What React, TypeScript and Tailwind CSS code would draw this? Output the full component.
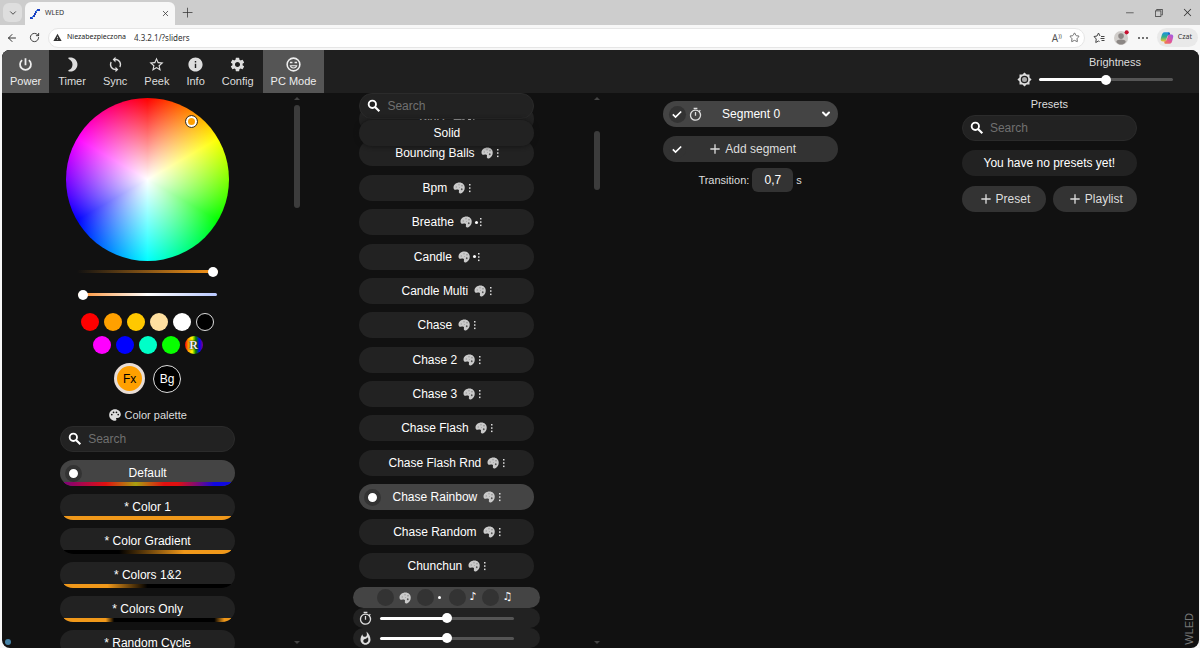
import { useState } from "react";
import type { ReactNode } from "react";
import {
    MdAdd,
    MdInfo,
    MdNightlightRound,
    MdOutlineTimer,
    MdPalette,
    MdSettings,
    MdStarBorder,
    MdSync,
    MdWarning,
    MdWhatshot,
} from "react-icons/md";
import {
    VscAdd,
    VscChromeClose,
    VscChromeMinimize,
    VscChromeRestore,
} from "react-icons/vsc";
import {
    LuArrowLeft,
    LuChevronDown,
    LuRotateCw,
    LuStar,
    LuX,
} from "react-icons/lu";

const palettes = [
    {
        name: "Default",
        bar: "bg-[linear-gradient(90deg,#80007a,#e01010_25%,#a8a010_43%,#e01010_60%,#e01010_68%,#7a0a7a_80%,#1008e0_90%,#1008e0)]",
    },
    { name: "* Color 1", bar: "bg-[#f0981a]" },
    {
        name: "* Color Gradient",
        bar: "bg-[linear-gradient(90deg,#000_33%,#f0981a_72%)]",
    },
    {
        name: "* Colors 1&2",
        bar: "bg-[linear-gradient(90deg,#f0981a_26%,#000_50%)]",
    },
    {
        name: "* Colors Only",
        bar: "bg-[linear-gradient(90deg,#f0981a_25%,#000_30%,#000_90%,#f0981a_96%)]",
    },
    { name: "* Random Cycle", bar: "bg-[#000]" },
];

const effects = [
    { name: "Blurz", flags: "pd" },
    { name: "Bouncing Balls", flags: "p" },
    { name: "Bpm", flags: "p" },
    { name: "Breathe", flags: "pd" },
    { name: "Candle", flags: "pd" },
    { name: "Candle Multi", flags: "p" },
    { name: "Chase", flags: "p" },
    { name: "Chase 2", flags: "p" },
    { name: "Chase 3", flags: "p" },
    { name: "Chase Flash", flags: "p" },
    { name: "Chase Flash Rnd", flags: "p" },
    { name: "Chase Rainbow", flags: "p" },
    { name: "Chase Random", flags: "p" },
    { name: "Chunchun", flags: "p" },
];

const swatches = [
    [
        ["Red", "bg-[#ff0000]"],
        ["Orange", "bg-[#ffa000]"],
        ["Amber", "bg-[#ffc800]"],
        ["Warm white", "bg-[#ffe0a0]"],
        ["White", "bg-white"],
        ["Black", "bg-black border border-[#ddd]"],
    ],
    [
        ["Magenta", "bg-[#ff00ff]"],
        ["Blue", "bg-[#0000ff]"],
        ["Cyan", "bg-[#00ffc8]"],
        ["Green", "bg-[#08ff00]"],
    ],
];

const thumb =
    "appearance-none rounded-full [&::-webkit-slider-thumb]:appearance-none [&::-webkit-slider-thumb]:size-[10px] [&::-webkit-slider-thumb]:rounded-full [&::-webkit-slider-thumb]:bg-white";
const halfTrack =
    "h-[3px] bg-[linear-gradient(90deg,#fff_50%,#555_50%)]";
const filterBox = "size-[17px] appearance-none rounded-full bg-[#333]";

function PaletteEmoji({ className }: { className: string }) {
    return (
        <svg viewBox="0 0 24 24" className={className}>
            <path
                d="M13 1C6 1 1 5.500 1 11c0 3.500 2 5 5 4.500 3-.6 5.500-.5 6 1.500.4 1.500-.8 2.500-.2 4 .7 1.900 3 2.200 5 1.300 4-1.800 6.700-6 6.700-11C23.500 5.500 19 1 13 1z"
                fill="#cacaca"
            />
            <circle cx="6.500" cy="10" r="1.500" fill="#9c9c9c" />
            <circle cx="12" cy="5.500" r="1.500" fill="#9c9c9c" />
            <circle cx="18" cy="7.500" r="1.500" fill="#888" />
            <circle cx="13" cy="11" r="1.200" fill="#a8a8a8" />
            <circle cx="17.500" cy="14.500" r="1.800" fill="#555" />
        </svg>
    );
}

function MoreDots() {
    return (
        <svg viewBox="0 0 3 10" className="h-[10px] w-[3px]" fill="#ddd">
            <rect x="1" y="1" width="1.500" height="1.500" />
            <rect x="1" y="4.300" width="1.500" height="1.500" />
            <rect x="1" y="7.600" width="1.500" height="1.500" />
        </svg>
    );
}

function PowerIcon() {
    return (
        <svg
            viewBox="0 0 24 24"
            className="size-[17px]"
            fill="none"
            stroke="currentColor"
            strokeWidth="2.500">
            <path d="M12 3v10M7.200 5.800a7.700 7.700 0 109.600 0" />
        </svg>
    );
}

function Smiley() {
    return (
        <svg
            viewBox="0 0 24 24"
            className="size-[17px]"
            fill="none"
            stroke="currentColor"
            strokeWidth="2.200">
            <circle cx="12" cy="12" r="9" />
            <path d="M7 9.300h3.500M13.500 9.300H17" />
            <path
                d="M7.500 13.700h9c-.6 2.200-2.300 3.300-4.500 3.300s-3.900-1.100-4.500-3.300z"
                strokeWidth="1.500"
            />
        </svg>
    );
}

function SearchIcon() {
    return (
        <svg
            viewBox="0 0 24 24"
            className="size-4 shrink-0"
            fill="none"
            stroke="#fff"
            strokeWidth="2.800">
            <circle cx="9.500" cy="9.500" r="5.500" />
            <path d="M13.500 13.500l6.500 6.500" strokeWidth="3.200" />
        </svg>
    );
}

function CheckIcon({ className }: { className: string }) {
    return (
        <svg
            viewBox="0 0 24 24"
            className={className}
            fill="none"
            stroke="#fff"
            strokeWidth="4">
            <path d="M2 13l6.500 6.500L22 6" />
        </svg>
    );
}

function SunIcon() {
    return (
        <svg viewBox="0 0 24 24" className="size-[15px]" fill="#ddd">
            <path d="M20 8.690V4h-4.690L12 .69 8.690 4H4v4.690L.69 12 4 15.310V20h4.690L12 23.310 15.310 20H20v-4.690L23.310 12 20 8.690z" />
            <circle cx="12" cy="12" r="5" fill="#aaa" stroke="#222" strokeWidth="2" />
        </svg>
    );
}

function Favicon() {
    return (
        <svg viewBox="0 0 10 10" className="size-[10px]" fill="#1c40c0">
            <path d="M7 0h3v2H7zM5 2h2v2H5zM4 4h2v2H4zM3 6h2v2H3zM0 8h3v2H0z" />
            <path d="M6 1h1v2H6zM2 7h1v2H2z" fill="#3e8ae8" />
        </svg>
    );
}

function CopilotLogo() {
    return (
        <svg viewBox="0 0 24 24" className="size-[14px]">
            <defs>
                <linearGradient id="cpA" x1="0" y1="0" x2="0" y2="1">
                    <stop offset="0" stopColor="#1a8fe3" />
                    <stop offset="0.500" stopColor="#2fae8c" />
                    <stop offset="1" stopColor="#f5c52c" />
                </linearGradient>
                <linearGradient id="cpB" x1="1" y1="0" x2="0" y2="1">
                    <stop offset="0" stopColor="#9a5cf0" />
                    <stop offset="0.500" stopColor="#e0559b" />
                    <stop offset="1" stopColor="#f5803c" />
                </linearGradient>
            </defs>
            <path
                d="M15 2H8C4.500 2 3.500 5 2.400 9.500 1 14 0 18 5 18h3c2 0 2.500-2 3.200-4.500C12.500 9 13.500 6 17 6c-.5-2-.8-4-2-4z"
                fill="url(#cpA)"
            />
            <path
                d="M9 22h7c3.500 0 4.500-3 5.600-7.500C23 10 24 6 19 6h-3c-2 0-2.500 2-3.200 4.500C11.500 15 10.500 18 7 18c.5 2 .8 4 2 4z"
                fill="url(#cpB)"
            />
            <path d="M15 2c1.500 0 2 2 2.500 4H15c-1 0-1.500 1-2 2z" fill="#1554c8" />
        </svg>
    );
}

function BrowserChrome() {
    return (
        <header className="font-['Noto_Sans',sans-serif] text-[7px] text-[#333]">
            <div className="flex h-[25px] items-end bg-[#cdcdcd] pl-[3px]">
                <button
                    aria-label="Tab actions"
                    className="mb-[3px] flex size-[19px] items-center justify-center rounded-md bg-[#dedede]">
                    <LuChevronDown className="size-[10px]" />
                </button>
                <div className="ml-[3px] flex h-[23px] w-[150px] items-center rounded-t-md bg-[#f7f7f7] px-[5px]">
                    <Favicon />
                    <span className="ml-[5px] flex-1">WLED</span>
                    <button aria-label="Close tab">
                        <LuX className="size-[9px]" />
                    </button>
                </div>
                <button aria-label="New tab" className="mb-[6px] ml-[7px]">
                    <VscAdd className="size-[12px]" />
                </button>
                <div className="mb-[7px] ml-auto mr-[7px] flex gap-[18px]">
                    <button aria-label="Minimize">
                        <VscChromeMinimize className="size-[11px]" />
                    </button>
                    <button aria-label="Restore">
                        <VscChromeRestore className="size-[11px]" />
                    </button>
                    <button aria-label="Close">
                        <VscChromeClose className="size-[11px]" />
                    </button>
                </div>
            </div>
            <div className="flex h-[25px] items-center gap-2 bg-[#f7f7f7] pl-[6px] pr-[2px]">
                <div className="flex gap-[11px]">
                    <button aria-label="Back">
                        <LuArrowLeft className="size-[12px]" />
                    </button>
                    <button aria-label="Refresh">
                        <LuRotateCw className="size-[11px]" />
                    </button>
                </div>
                <div className="flex h-5 flex-1 items-center rounded-full border border-[#e6e6e6] bg-white px-1">
                    <MdWarning className="size-[9px]" />
                    <span className="ml-[5px] text-[#222]">
                        Niezabezpieczona
                    </span>
                    <input
                        aria-label="Address"
                        defaultValue="4.3.2.1/?sliders"
                        className="ml-2 min-w-0 flex-1 text-[8px] text-[#333] outline-none"
                    />
                    <button
                        aria-label="Read aloud"
                        className="flex items-start text-[10px] leading-none text-[#555]">
                        A<sup className="top-0 text-[6px] leading-none">))</sup>
                    </button>
                    <button aria-label="Add to favorites" className="ml-[7px]">
                        <LuStar className="size-[11px] text-[#666]" />
                    </button>
                </div>
                <div className="flex items-center gap-[9px]">
                    <button aria-label="Favorites">
                        <svg
                            viewBox="0 0 24 24"
                            className="size-[12px]"
                            fill="none"
                            stroke="#444"
                            strokeWidth="2">
                            <path d="M14 8l-3-6-3 6-6 1 4.500 5L5.500 21l5.500-3 2 1M16 9h7M15 13h8M17 17h6" />
                        </svg>
                    </button>
                    <button aria-label="Profile">
                        <svg viewBox="0 0 16 16" className="size-[15px]">
                            <circle cx="7.500" cy="8.500" r="7.500" fill="#d0cdca" />
                            <circle cx="7.500" cy="6.500" r="3" fill="#8c8785" />
                            <path
                                d="M2.500 12.500c0-3 10-3 10 0-1.500 4-8.500 4-10 0z"
                                fill="#8c8785"
                            />
                            <circle cx="13.500" cy="2.500" r="2.200" fill="#c50f2f" />
                        </svg>
                    </button>
                    <button aria-label="Menu" className="flex gap-[2px]">
                        <i className="size-[2px] rounded-full bg-[#444]" />
                        <i className="size-[2px] rounded-full bg-[#444]" />
                        <i className="size-[2px] rounded-full bg-[#444]" />
                    </button>
                    <button className="flex h-[19px] items-center gap-1 rounded-full bg-[#e9e9e9] pl-[3px] pr-[6px]">
                        <CopilotLogo />
                        Czat
                    </button>
                </div>
            </div>
        </header>
    );
}

function NavButton({
    icon,
    label,
    active,
}: {
    icon: ReactNode;
    label: string;
    active?: boolean;
}) {
    return (
        <button
            className={`flex h-[43px] flex-col items-center px-2 pt-[6px] text-[11px] leading-4 ${
                active ? "bg-[#555] text-[#eee]" : "text-[#ddd]"
            }`}>
            {icon}
            {label}
        </button>
    );
}

function TopBar() {
    return (
        <nav className="flex h-[43px] items-start justify-between bg-[#1f1f1f]">
            <div className="flex gap-px">
                <NavButton active label="Power" icon={<PowerIcon />} />
                <NavButton
                    label="Timer"
                    icon={
                        <MdNightlightRound className="size-[17px] -scale-x-100" />
                    }
                />
                <NavButton
                    label="Sync"
                    icon={<MdSync className="size-[17px]" />}
                />
                <NavButton
                    label="Peek"
                    icon={<MdStarBorder className="size-[17px]" />}
                />
                <NavButton
                    label="Info"
                    icon={<MdInfo className="size-[17px]" />}
                />
                <NavButton
                    label="Config"
                    icon={<MdSettings className="size-[17px]" />}
                />
                <NavButton active label="PC Mode" icon={<Smiley />} />
            </div>
            <div className="mr-[26px] flex flex-col items-end pt-1">
                <label
                    htmlFor="bri"
                    className="mr-8 text-[11px] leading-4 text-[#ddd]">
                    Brightness
                </label>
                <div className="flex items-center gap-[7px] pt-[2px]">
                    <SunIcon />
                    <input
                        id="bri"
                        type="range"
                        defaultValue={50}
                        className={`w-[134px] ${thumb} ${halfTrack}`}
                    />
                </div>
            </div>
        </nav>
    );
}

function SearchBox({ label }: { label: string }) {
    return (
        <div className="flex h-[26px] w-[175px] items-center gap-[5px] rounded-full border border-[#2b2b2b] bg-[#222] pl-[6px]">
            <SearchIcon />
            <input
                type="search"
                aria-label={label}
                placeholder="Search"
                className="w-0 flex-1 text-xs outline-none placeholder:text-[#707070]"
            />
        </div>
    );
}

function ScrollBar({ thumbClass }: { thumbClass: string }) {
    return (
        <div className="flex w-2 shrink-0 flex-col items-center py-[4px]">
            <i className="border-x-[3px] border-b-[3px] border-x-transparent border-b-[#444]" />
            <div className={`w-[6px] rounded-full bg-[#3c3c3c] ${thumbClass}`} />
            <i className="mt-auto border-x-[3px] border-t-[3px] border-x-transparent border-t-[#444]" />
        </div>
    );
}

function RadioPill({
    group,
    name,
    selected,
    onSelect,
    children,
}: {
    group: string;
    name: string;
    selected: boolean;
    onSelect: () => void;
    children?: ReactNode;
}) {
    return (
        <label
            className={`relative flex h-[26px] w-[175px] shrink-0 items-center justify-center overflow-hidden rounded-full text-xs text-white ${
                selected ? "bg-[#444]" : "bg-[#222]"
            }`}>
            <input
                type="radio"
                name={group}
                checked={selected}
                onChange={onSelect}
                className="absolute left-[5px] size-[17px] appearance-none rounded-full border-4 border-transparent checked:border-[#333] checked:bg-white"
            />
            {name}
            {children}
        </label>
    );
}

function ColorColumn() {
    const [palette, setPalette] = useState("Default");

    return (
        <section className="flex min-h-0 overflow-hidden">
            <div className="flex min-w-0 flex-1 flex-col items-center pt-[5px]">
                <div className="relative size-[163px] shrink-0 rounded-full bg-[radial-gradient(closest-side,#fff,transparent),conic-gradient(#f00,#ff0,#0f0,#0ff,#00f,#f0f,#f00)]">
                    <div className="absolute left-[120px] top-[18px] size-[11px] rounded-full border-2 border-white bg-[#ffa000] outline outline-[#333]" />
                </div>
                <input
                    type="range"
                    aria-label="Color brightness"
                    defaultValue={100}
                    className={`mt-[9px] h-[3px] w-[141px] shrink-0 bg-[linear-gradient(90deg,#111,#ff9a1a)] ${thumb}`}
                />
                <input
                    type="range"
                    aria-label="White balance"
                    defaultValue={0}
                    className={`mt-5 h-[3px] w-[139px] shrink-0 bg-[linear-gradient(90deg,#ff9030,#fff_50%,#b8c8ff)] ${thumb}`}
                />
                <div className="mt-[17px] flex gap-[5px]">
                    {swatches[0].map(([name, color]) => (
                        <button
                            key={name}
                            aria-label={name}
                            className={`size-[18px] rounded-full ${color}`}
                        />
                    ))}
                </div>
                <div className="mt-[5px] flex gap-[5px]">
                    {swatches[1].map(([name, color]) => (
                        <button
                            key={name}
                            aria-label={name}
                            className={`size-[18px] rounded-full ${color}`}
                        />
                    ))}
                    <button
                        aria-label="Random"
                        className="size-[18px] rounded-full bg-[linear-gradient(90deg,red,orange,yellow,green,blue,purple)] font-['Liberation_Serif',serif] text-xs font-bold leading-[18px] text-[#eee] [text-shadow:0_0_1px_#000,0_0_2px_#000]">
                        R
                    </button>
                </div>
                <div className="mt-[9px] flex items-center gap-2 text-xs">
                    <button className="size-[31px] rounded-full border-[3px] border-[#e8ddd6] bg-[#ffa000] leading-none text-black">
                        Fx
                    </button>
                    <button className="size-7 rounded-full border border-[#ddd] bg-black leading-none text-white">
                        Bg
                    </button>
                </div>
                <p className="mt-[13px] flex items-center gap-[2px] text-[11px] leading-4 text-[#ddd]">
                    <MdPalette className="size-[14px]" />
                    Color palette
                </p>
                <div className="mt-[3px] flex flex-col gap-2">
                    <SearchBox label="Search palettes" />
                    {palettes.map((p) => (
                        <RadioPill
                            key={p.name}
                            group="palette"
                            name={p.name}
                            selected={p.name === palette}
                            onSelect={() => setPalette(p.name)}>
                            <span
                                className={`absolute inset-x-1 bottom-0 h-1 ${p.bar}`}
                            />
                        </RadioPill>
                    ))}
                </div>
            </div>
            <ScrollBar thumbClass="mt-[5px] h-[103px]" />
        </section>
    );
}

function EffectsColumn() {
    const [effect, setEffect] = useState("Chase Rainbow");

    return (
        <section className="flex min-h-0 overflow-hidden">
            <div className="relative flex min-w-0 flex-1 flex-col items-center">
                <div className="mt-[13px] flex min-h-0 flex-1 flex-col justify-between">
                    {effects.map((e) => (
                        <RadioPill
                            key={e.name}
                            group="effect"
                            name={e.name}
                            selected={e.name === effect}
                            onSelect={() => setEffect(e.name)}>
                            <span className="ml-[6px] flex items-center gap-[3px]">
                                <PaletteEmoji className="size-3" />
                                {e.flags === "pd" && (
                                    <i className="-mr-[2px] size-[3px] rounded-full bg-white" />
                                )}
                                <MoreDots />
                            </span>
                        </RadioPill>
                    ))}
                </div>
                <form className="mt-2 flex h-[21px] w-[187px] shrink-0 items-center justify-center gap-[6px] rounded-full bg-[#444] pr-1 text-[11px] text-white">
                    <label className="flex items-center gap-[5px]">
                        <input
                            type="checkbox"
                            aria-label="Palette effects"
                            className={filterBox}
                        />
                        <PaletteEmoji className="size-3" />
                    </label>
                    <label className="flex items-center gap-1">
                        <input
                            type="checkbox"
                            aria-label="0D effects"
                            className={filterBox}
                        />
                        <i className="mr-[2px] size-[3px] rounded-full bg-white" />
                    </label>
                    <label className="flex items-center gap-[3px] font-['DejaVu_Sans',sans-serif]">
                        <input
                            type="checkbox"
                            aria-label="Volume effects"
                            className={filterBox}
                        />
                        ♪
                    </label>
                    <label className="flex items-center gap-[3px] font-['DejaVu_Sans',sans-serif]">
                        <input
                            type="checkbox"
                            aria-label="Frequency effects"
                            className={filterBox}
                        />
                        ♫
                    </label>
                </form>
                <label className="flex h-5 w-[187px] shrink-0 items-center gap-[7px] rounded-full bg-[#222] pl-[5px] text-[#ddd]">
                    <MdOutlineTimer className="size-[15px]" />
                    <input
                        type="range"
                        aria-label="Effect speed"
                        defaultValue={50}
                        className={`w-[134px] ${thumb} ${halfTrack}`}
                    />
                </label>
                <label className="flex h-5 w-[187px] shrink-0 items-center gap-[7px] rounded-full bg-[#222] pl-[5px] text-[#ddd]">
                    <MdWhatshot className="size-[15px]" />
                    <input
                        type="range"
                        aria-label="Effect intensity"
                        defaultValue={50}
                        className={`w-[134px] ${thumb} ${halfTrack}`}
                    />
                </label>
                {/* stays on top of the scrolled list */}
                <div className="absolute top-0 flex flex-col gap-px">
                    <SearchBox label="Search effects" />
                    <div className="rounded-full shadow-[0_0_5px_#111]">
                        <RadioPill
                            group="effect"
                            name="Solid"
                            selected={effect === "Solid"}
                            onSelect={() => setEffect("Solid")}
                        />
                    </div>
                </div>
            </div>
            <ScrollBar thumbClass="mt-[31px] h-[59px]" />
        </section>
    );
}

function RoundCheck({ label }: { label: string }) {
    return (
        <label className="relative flex size-[17px] items-center justify-center">
            <input
                type="checkbox"
                aria-label={label}
                defaultChecked
                className="peer size-[17px] appearance-none rounded-full bg-[#333]"
            />
            <CheckIcon className="pointer-events-none invisible absolute size-[10px] peer-checked:visible" />
        </label>
    );
}

function SegmentsColumn() {
    return (
        <section className="flex flex-col items-center pt-2 text-xs">
            <div className="flex h-[26px] w-[175px] items-center rounded-full bg-[#444] px-[6px] text-white">
                <RoundCheck label="Select segment 0" />
                <MdOutlineTimer className="ml-[2px] size-[15px] text-[#ddd]" />
                <span className="flex-1 pr-5 text-center">Segment 0</span>
                <button aria-label="Expand segment">
                    <LuChevronDown className="size-3 stroke-4" />
                </button>
            </div>
            <div className="mt-[9px] flex h-[26px] w-[175px] items-center rounded-full bg-[#333] px-[6px] text-[#ddd]">
                <RoundCheck label="Select all segments" />
                <button className="flex flex-1 items-center justify-center gap-[2px] pr-[14px]">
                    <MdAdd className="size-4" />
                    Add segment
                </button>
            </div>
            <label className="mt-[6px] flex items-center gap-[3px] text-[11px] text-[#ddd]">
                Transition:
                <input
                    defaultValue="0,7"
                    className="h-6 w-[41px] rounded-md bg-[#333] text-center text-xs text-white outline-none"
                />
                s
            </label>
        </section>
    );
}

function PresetsColumn() {
    return (
        <section className="relative flex flex-col items-center pt-[3px] text-xs">
            <h2 className="text-[11px] leading-4 text-[#ddd]">Presets</h2>
            <div className="mt-[3px]">
                <SearchBox label="Search presets" />
            </div>
            <p className="mt-[9px] flex h-[26px] w-[175px] items-center justify-center rounded-full bg-[#222] text-white">
                You have no presets yet!
            </p>
            <div className="mt-[10px] flex w-[175px] gap-[7px] text-[#ddd]">
                <button className="flex h-[26px] flex-1 items-center justify-center gap-[2px] rounded-full bg-[#333]">
                    <MdAdd className="size-4" />
                    Preset
                </button>
                <button className="flex h-[26px] flex-1 items-center justify-center gap-[2px] rounded-full bg-[#333]">
                    <MdAdd className="size-4" />
                    Playlist
                </button>
            </div>
            <span className="absolute bottom-[3px] right-1 rotate-180 text-[11px] leading-3 text-[#777] [writing-mode:vertical-rl]">
                WLED
            </span>
        </section>
    );
}

function App() {
    return (
        <div className="flex h-screen flex-col overflow-hidden bg-[#f7f7f7]">
            <BrowserChrome />
            <main className="relative ml-[2px] mr-px flex min-h-0 flex-1 flex-col overflow-hidden rounded-lg bg-[#111] font-['Liberation_Sans',Arial,sans-serif]">
                <TopBar />
                <div className="grid min-h-0 flex-1 grid-cols-4 grid-rows-1">
                    <ColorColumn />
                    <EffectsColumn />
                    <SegmentsColumn />
                    <PresetsColumn />
                </div>
                <i className="absolute bottom-[3px] left-[3px] size-[6px] rounded-full bg-[#4682a6]" />
            </main>
        </div>
    );
}

export default App;
